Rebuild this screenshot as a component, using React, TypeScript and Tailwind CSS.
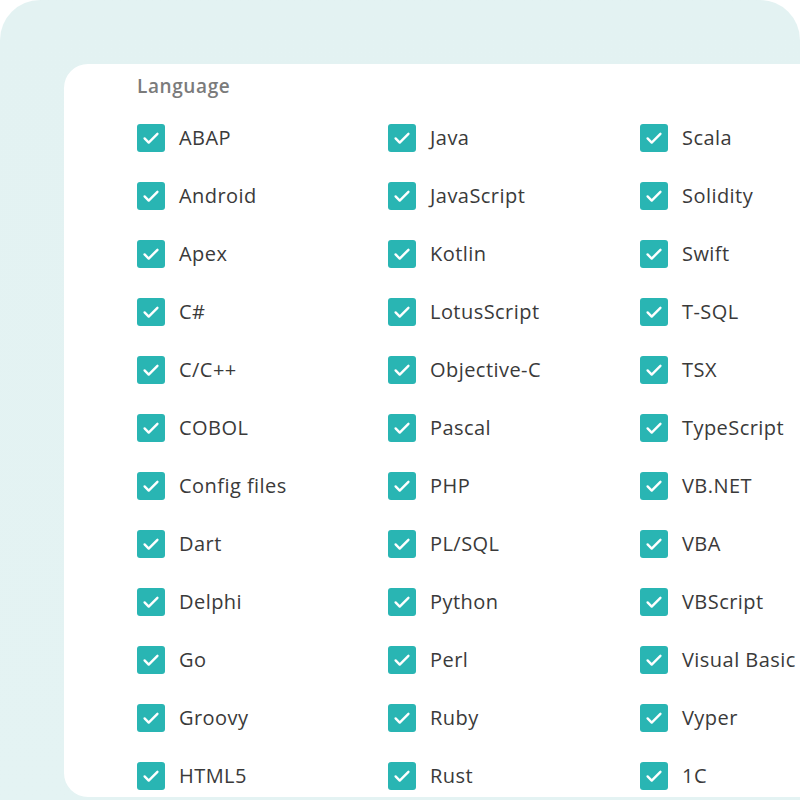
const columns = [
  ["ABAP", "Android", "Apex", "C#", "C/C++", "COBOL", "Config files", "Dart", "Delphi", "Go", "Groovy", "HTML5"],
  ["Java", "JavaScript", "Kotlin", "LotusScript", "Objective-C", "Pascal", "PHP", "PL/SQL", "Python", "Perl", "Ruby", "Rust"],
  ["Scala", "Solidity", "Swift", "T-SQL", "TSX", "TypeScript", "VB.NET", "VBA", "VBScript", "Visual Basic", "Vyper", "1C"],
];

function CheckItem({ label }: { label: string }) {
  return (
    <label className="flex h-[58px] items-center gap-[14px]">
      <span className="flex h-[28px] w-[28px] shrink-0 items-center justify-center rounded-[3px] bg-[#29b5b3]">
        <svg viewBox="0 0 24 24" className="h-[22px] w-[22px]" fill="none" stroke="white" strokeWidth="2.6" strokeLinecap="round" strokeLinejoin="round">
          <path d="M5 12.5l4.5 4.5L19 7.5" />
        </svg>
      </span>
      <span className="whitespace-nowrap text-[20px] tracking-[0.45px] text-[#3a3a3a]">{label}</span>
    </label>
  );
}

export default function App() {
  return (
    <div className="h-[800px] w-[800px] overflow-hidden bg-white" style={{ fontFamily: '"Open Sans", sans-serif' }}>
      <div className="h-full rounded-t-[40px] bg-gradient-to-b from-[#e3f2f2] to-[#e4f3f3] pl-16 pt-16">
        <div className="h-[733px] rounded-l-[24px] bg-white pl-[73px] pt-[9px]">
          <h3 className="text-[19px] font-semibold leading-[26px] tracking-[0.6px] text-[#7b7b7b]">Language</h3>
          <div className="mt-[10px] grid grid-cols-[251px_252px_1fr]">
            {columns.map((col, i) => (
              <div key={i} className="flex flex-col">
                {col.map((name) => (
                  <CheckItem key={name} label={name} />
                ))}
              </div>
            ))}
          </div>
        </div>
      </div>
    </div>
  );
}
